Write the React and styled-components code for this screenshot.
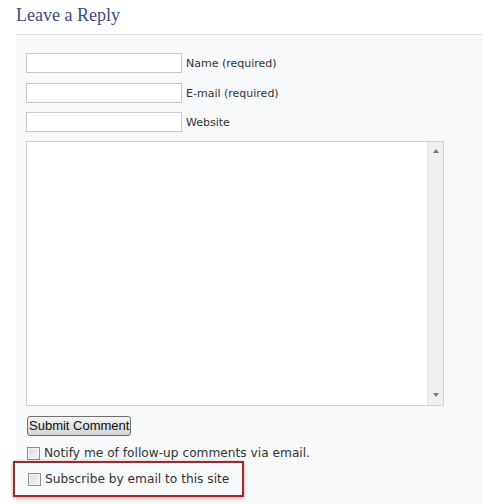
import React from "react";
import styled, { createGlobalStyle } from "styled-components";

const Global = createGlobalStyle`
  html, body { margin: 0; padding: 0; background: #ffffff; }
  body { width: 483px; height: 504px; overflow: hidden; }
`;

const Page = styled.div`
  display: flex;
  flex-direction: column;
  padding-left: 16px;
  height: 504px;
  box-sizing: border-box;
`;

const Heading = styled.h3`
  margin: 0;
  padding-top: 4px;
  height: 34px;
  box-sizing: border-box;
  font-family: "Liberation Serif", "Times New Roman", serif;
  font-weight: normal;
  font-size: 18px;
  line-height: 22px;
  color: #3d4b7e;
`;

const Panel = styled.form`
  flex: 1;
  background: #f8f9fb;
  border-top: 1px solid #dde0e5;
  padding: 18px 0 0 10px;
  display: flex;
  flex-direction: column;
  align-items: flex-start;
`;

const FieldRow = styled.div`
  display: flex;
  align-items: center;
  gap: 4px;
  margin-bottom: ${(p) => p.$gap}px;
`;

const TextInput = styled.input`
  width: 156px;
  height: 20px;
  box-sizing: border-box;
  border: 1px solid #c7c7c7;
  background: #fff;
  margin: 0;
  padding: 0 3px;
`;

const Label = styled.label`
  font-family: "DejaVu Sans", Verdana, sans-serif;
  font-size: 11px;
  color: #333;
`;

const AreaFrame = styled.div`
  display: flex;
  width: 418px;
  height: 265px;
  box-sizing: border-box;
  border: 1px solid #cfcfcf;
  background: #fff;
  margin-bottom: 10px;
`;

const Area = styled.textarea`
  flex: 1;
  border: none;
  resize: none;
  outline: none;
  margin: 0;
  background: transparent;
`;

const ScrollTrack = styled.div`
  width: 15px;
  background: #f0f0f0;
  border-left: 1px solid #e6e6e6;
  display: flex;
  flex-direction: column;
  justify-content: space-between;
  align-items: center;
  padding: 7px 0 8px;
`;

const Arrow = styled.span`
  width: 0;
  height: 0;
  border-left: 3.5px solid transparent;
  border-right: 3.5px solid transparent;
  ${(p) =>
    p.$down
      ? "border-top: 4px solid #7a7a7a;"
      : "border-bottom: 4px solid #7a7a7a;"}
`;

const SubmitButton = styled.button`
  margin: 0 0 10px 1px;
  height: 20px;
  padding: 0 1px;
  white-space: nowrap;
  font-family: "Liberation Sans", Arial, sans-serif;
  font-size: 13px;
  line-height: 18px;
  color: #111;
  border: 1px solid #707070;
  border-radius: 3px;
  background: linear-gradient(#f4f4f4, #e2e2e2 50%, #d4d4d4);
`;

const CheckRow = styled.label`
  display: flex;
  align-items: center;
  gap: 4px;
  font-family: "DejaVu Sans", Verdana, sans-serif;
  font-size: 12.2px;
  color: #333;
  margin-left: 1px;
`;

const Box = styled.span`
  width: 13px;
  height: 13px;
  box-sizing: border-box;
  border: 1px solid #8f8f8f;
  background: linear-gradient(135deg, #dcdcdc, #f6f6f6);
  box-shadow: inset 0 0 0 1px #f4f4f4;
  flex: none;
`;

const Highlight = styled.div`
  margin: 1px 0 0 -13px;
  width: 231px;
  height: 36px;
  box-sizing: border-box;
  border: 2px solid #a2262d;
  box-shadow: 0 1px 4px rgba(0, 0, 0, 0.35);
  padding-left: 12px;
  display: flex;
  align-items: center;
`;

export default function App() {
  return (
    <>
      <Global />
      <Page>
        <Heading>Leave a Reply</Heading>
        <Panel>
          <FieldRow $gap={10}>
            <TextInput />
            <Label>Name (required)</Label>
          </FieldRow>
          <FieldRow $gap={9}>
            <TextInput />
            <Label>E-mail (required)</Label>
          </FieldRow>
          <FieldRow $gap={9}>
            <TextInput />
            <Label>Website</Label>
          </FieldRow>
          <AreaFrame>
            <Area />
            <ScrollTrack>
              <Arrow />
              <Arrow $down />
            </ScrollTrack>
          </AreaFrame>
          <SubmitButton type="button">Submit Comment</SubmitButton>
          <CheckRow>
            <Box />
            Notify me of follow-up comments via email.
          </CheckRow>
          <Highlight>
            <CheckRow>
              <Box />
              Subscribe by email to this site
            </CheckRow>
          </Highlight>
        </Panel>
      </Page>
    </>
  );
}
